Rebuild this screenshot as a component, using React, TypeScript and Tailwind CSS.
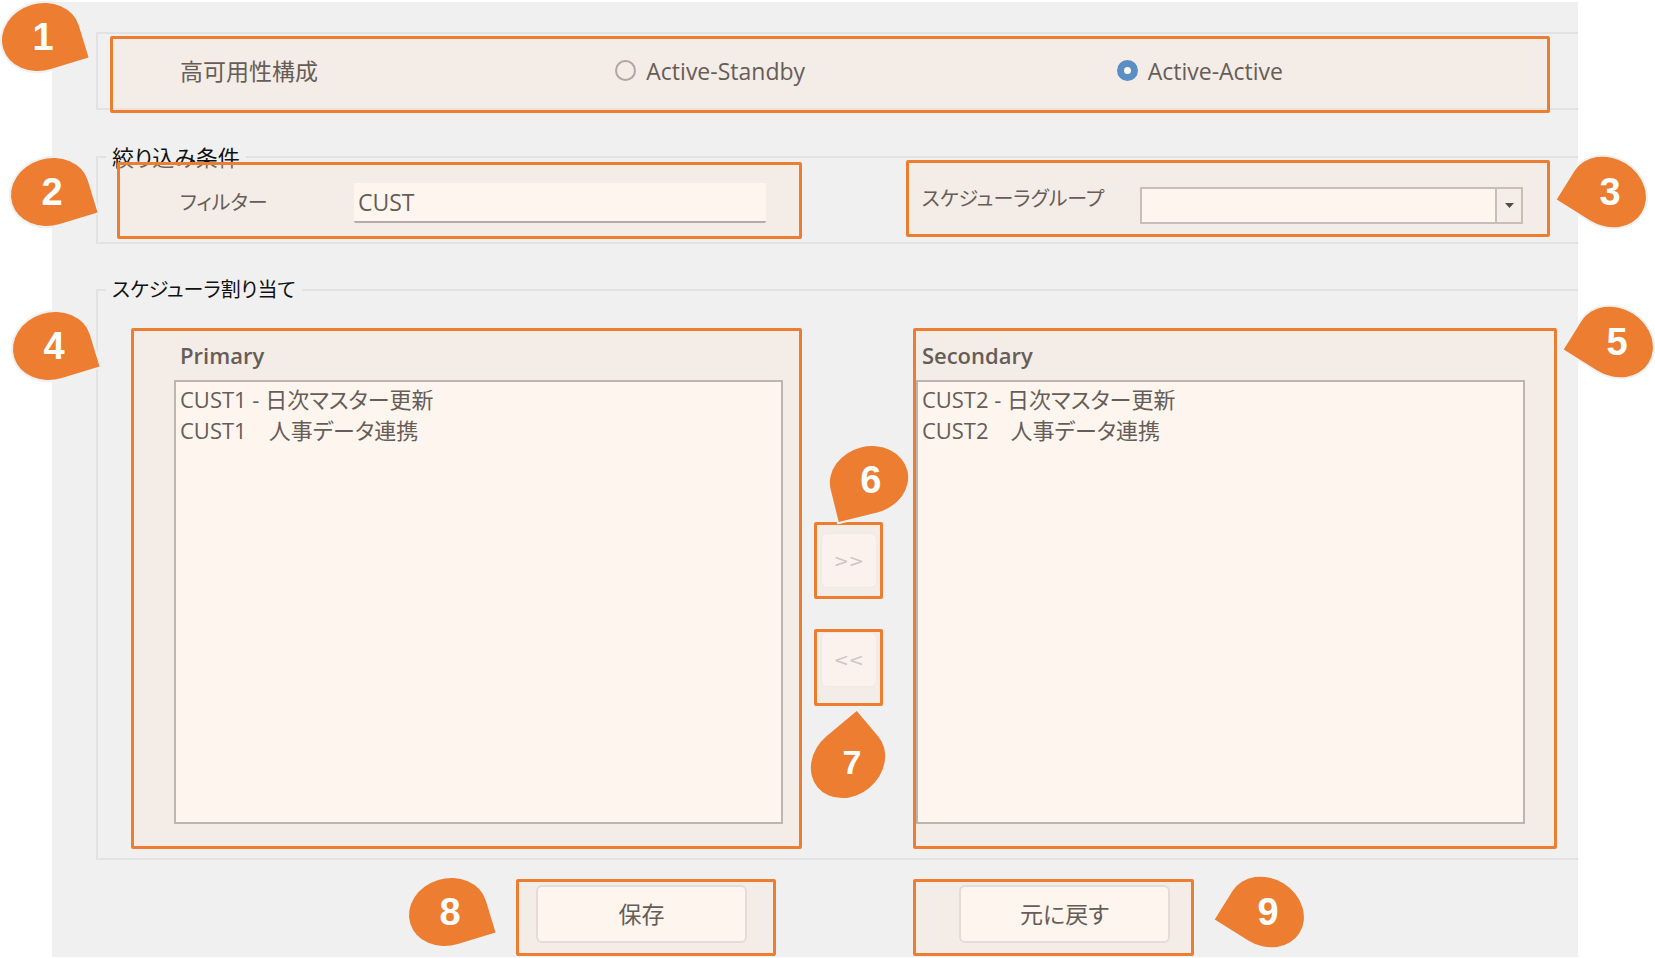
import { ReactNode, useState } from 'react';

import clsx from 'clsx';

type PinDirection = 'right' | 'left' | 'down' | 'up';

interface PinProps {
	label: string;
	direction: PinDirection;
	className: string;
}

// one square-cornered ellipse, turned so that the corner points at its box
const pins = {
	right: {
		path: 'M39.5 33.5H0A39.5 33.5 0 1 1 39.5 0Z',
		rotate: 'rotate(-17)',
	},
	left: {
		path: 'M-39.5 33.5V0A39.5 33.5 0 1 1 0 33.5Z',
		rotate: 'rotate(32)',
	},
	down: {
		path: 'M-39.5 33.5V0A39.5 33.5 0 1 1 0 33.5Z',
		rotate: 'rotate(-14)',
	},
	up: {
		path: 'M39.5 -33.5V0A39.5 33.5 0 1 1 0 -33.5Z',
		rotate: 'rotate(-40)',
	},
};

const Pin = ({ label, direction, className }: PinProps) => {
	const pin = pins[direction];

	return (
		<div
			className={clsx(
				'absolute z-10 flex items-center justify-center size-[110px] pointer-events-none',
				className
			)}
		>
			<svg className="absolute inset-0 size-full" viewBox="-55 -55 110 110">
				<path
					d={pin.path}
					transform={pin.rotate}
					fill="#ed7d31"
					stroke="#f0f0f0"
					strokeWidth="4"
					paintOrder="stroke"
				/>
			</svg>
			<span
				className={clsx(
					'relative font-bold text-white font-["Liberation_Sans",sans-serif]',
					direction === 'up' ? 'pl-2 text-[34px]' : 'pl-1 text-[38px]'
				)}
			>
				{label}
			</span>
		</div>
	);
};

interface CalloutProps extends PinProps {
	pinClassName: string;
	children: ReactNode;
}

const Callout = ({
	label,
	direction,
	className,
	pinClassName,
	children,
}: CalloutProps) => (
	<div
		className={clsx(
			'relative border-3 border-[#ed7d31] rounded-[2px] bg-[#fbe5d6]/40',
			className
		)}
	>
		{children}
		<Pin label={label} direction={direction} className={pinClassName} />
	</div>
);

interface SchedulerListProps {
	id: string;
	title: string;
	items: string[];
	titleClassName: string;
	listClassName: string;
}

const SchedulerList = ({
	id,
	title,
	items,
	titleClassName,
	listClassName,
}: SchedulerListProps) => (
	<div className="flex flex-col text-[22px]">
		<label
			htmlFor={id}
			className={clsx('h-[49px] pt-3 font-semibold', titleClassName)}
		>
			{title}
		</label>
		<select
			id={id}
			multiple
			className={clsx(
				'h-[444px] p-0 border-2 border-[#bdb5b1] bg-[#fff5ef] overflow-hidden outline-none',
				listClassName
			)}
		>
			{items.map((item) => (
				<option key={item} className="h-[31px] p-0 px-1 leading-[31px]">
					{item}
				</option>
			))}
		</select>
	</div>
);

const modes = ['Active-Standby', 'Active-Active'];

const App = () => {
	const [mode, setMode] = useState('Active-Active');
	const [filter, setFilter] = useState('CUST');

	return (
		<div className="min-h-screen pt-[2px] pb-px pl-[52px] pr-[77px] bg-white overflow-hidden">
			<main className='pt-[30px] pb-px bg-[#f0f0f0] text-[#665d58] text-[23px] leading-6 font-["Open_Sans","Noto_Sans_CJK_JP",sans-serif] [font-feature-settings:"palt"]'>
				<section className="ml-11 pt-[2px] pl-3 pr-7 h-[78px] border-2 border-r-0 border-[#e2e2e2]">
					<Callout
						label="1"
						direction="right"
						className="h-[77px]"
						pinClassName="-left-[127px] -top-[57px]"
					>
						<div
							role="radiogroup"
							aria-labelledby="ha-label"
							className="grid grid-cols-[435fr_501fr_430fr] items-center h-full pl-[67px] pb-2"
						>
							<span id="ha-label">高可用性構成</span>
							{modes.map((item) => (
								<label key={item} className="flex items-center gap-[10px]">
									<input
										type="radio"
										name="mode"
										checked={mode === item}
										onChange={() => setMode(item)}
										className="appearance-none size-[21px] border-2 border-[#b0a7a3] rounded-full checked:border-[7px] checked:border-[#5b8ec5] checked:bg-[#fff5ef]"
									/>
									{item}
								</label>
							))}
						</div>
					</Callout>
				</section>

				<fieldset className="min-w-0 mt-[35px] ml-11 pb-[3px] border-2 border-r-0 border-[#e2e2e2]">
					<legend className="ml-2 px-[6px] text-[#111] text-[22px]">
						絞り込み条件
					</legend>
					<div className="flex items-start gap-[104px] -mt-[9px] pl-[19px] pr-7">
						<Callout
							label="2"
							direction="right"
							className="flex-[685] min-w-0 h-[77px] mt-[2px]"
							pinClassName="-left-[125px] -top-[28px]"
						>
							<div className="flex items-center h-full pt-1 pl-[60px] pr-[33px]">
								<label htmlFor="filter" className="w-[174px] shrink-0 text-[20px]">
									フィルター
								</label>
								<input
									id="filter"
									type="text"
									value={filter}
									onChange={(e) => setFilter(e.target.value)}
									className="grow min-w-0 h-10 px-1 border-b-2 border-[#b5aba6] rounded-[2px] bg-[#fff5ef] outline-none"
								/>
							</div>
						</Callout>
						<Callout
							label="3"
							direction="left"
							className="flex-[644] min-w-0 h-[77px]"
							pinClassName="-right-[116px] -top-[26px]"
						>
							<div className="flex items-start pt-6 pl-[13px] pr-6">
								<label htmlFor="group" className="w-[218px] shrink-0 text-[20px]">
									スケジューラグループ
								</label>
								<div className="relative grow h-[37px]">
									<select
										id="group"
										className="appearance-none size-full border-2 border-[#c8beb9] bg-[#fff5ef] outline-none"
									/>
									<span className="absolute inset-y-[2px] right-[2px] flex items-center justify-center w-[26px] border-l-2 border-[#c8beb9] bg-[#f5ede8] pointer-events-none">
										<svg className="w-[9px] h-[5px]" viewBox="0 0 9 5">
											<path d="M0 0H9L4.5 5Z" fill="#554c48" />
										</svg>
									</span>
								</div>
							</div>
						</Callout>
					</div>
				</fieldset>

				<fieldset className="min-w-0 mt-[34px] ml-11 pb-[9px] border-2 border-r-0 border-[#e2e2e2]">
					<legend className="ml-2 px-[6px] text-[#111] text-[20px]">
						スケジューラ割り当て
					</legend>
					<div className="flex items-start mt-[26px] pl-[33px] pr-[21px]">
						<Callout
							label="4"
							direction="right"
							className="flex-[671] min-w-0 h-[521px]"
							pinClassName="-left-[137px] -top-[40px]"
						>
							<SchedulerList
								id="primary"
								title="Primary"
								items={['CUST1 - 日次マスター更新', 'CUST1\u3000人事データ連携']}
								titleClassName="pl-[46px]"
								listClassName="ml-10 mr-4"
							/>
						</Callout>
						<div className="flex flex-col items-start gap-[30px] w-[111px] shrink-0 pt-[194px] pl-3">
							<Callout
								label="6"
								direction="down"
								className="w-[69px] h-[77px] pt-2 pl-1"
								pinClassName="-left-[3px] -top-[100px]"
							>
								<button
									type="button"
									disabled
									className='block w-14 h-[55px] border border-[#f3e8e3] rounded-md bg-[#fbf2ed] text-[#cfc5c1] text-[18px] font-["DejaVu_Sans",sans-serif]'
								>
									&gt;&gt;
								</button>
							</Callout>
							<Callout
								label="7"
								direction="up"
								className="w-[69px] h-[77px] pl-1"
								pinClassName="-left-[24px] top-[75px]"
							>
								<button
									type="button"
									disabled
									className='block w-14 h-[55px] border border-[#f3e8e3] rounded-md bg-[#fbf2ed] text-[#cfc5c1] text-[18px] font-["DejaVu_Sans",sans-serif]'
								>
									&lt;&lt;
								</button>
							</Callout>
						</div>
						<Callout
							label="5"
							direction="left"
							className="flex-[644] min-w-0 h-[521px]"
							pinClassName="-right-[116px] -top-[44px]"
						>
							<SchedulerList
								id="secondary"
								title="Secondary"
								items={['CUST2 - 日次マスター更新', 'CUST2\u3000人事データ連携']}
								titleClassName="pl-[6px]"
								listClassName="mr-[29px]"
							/>
						</Callout>
					</div>
				</fieldset>

				<div className="grid grid-cols-[464fr_260fr_137fr_281fr_384fr] mt-[19px]">
					<Callout
						label="8"
						direction="right"
						className="col-start-2 h-[77px] pt-[3px] pl-[17px]"
						pinClassName="-left-[126px] -top-[25px]"
					>
						<button
							type="button"
							className="block w-[211px] h-[58px] border-2 border-[#e6dcd7] rounded-md bg-[#fff5ef]"
						>
							保存
						</button>
					</Callout>
					<Callout
						label="9"
						direction="left"
						className="col-start-4 h-[77px] pt-[3px] pl-[43px]"
						pinClassName="-right-[130px] -top-[25px]"
					>
						<button
							type="button"
							className="block w-[211px] h-[58px] border-2 border-[#e6dcd7] rounded-md bg-[#fff5ef]"
						>
							元に戻す
						</button>
					</Callout>
				</div>
			</main>
		</div>
	);
};

export default App;
